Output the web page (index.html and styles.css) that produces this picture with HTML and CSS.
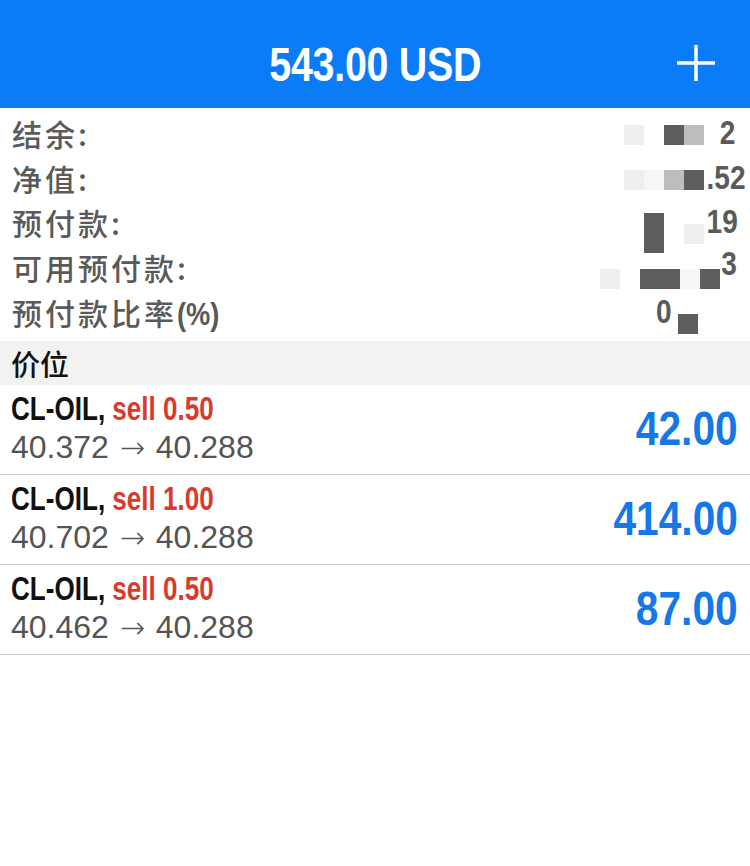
FILE: index.html
```html
<!DOCTYPE html>
<html lang="zh">
<head>
    <meta charset="UTF-8">
    <meta name="viewport" content="width=device-width, initial-scale=1.0">
    <title>交易</title>
    <link rel="stylesheet" href="styles.css">
</head>
<body>
    <div id="tradeApp">
        <div id="topBar">
            <div class="balanceTitle"><span>543.00 USD</span></div>
            <svg class="addBtn" width="40" height="40" viewBox="0 0 40 40">
                <path d="M20 2 V38 M1 20 H39" stroke="#fff" stroke-width="3.5" fill="none"/>
            </svg>
        </div>

        <div id="accountStats">
            <div class="statRow">
                <span class="statLabel">结余:</span>
                <span class="statValue">
                    <i class="px light"></i><i class="px gap"></i><i class="px dark"></i><i class="px mid"></i><b>2</b>
                </span>
            </div>
            <div class="statRow">
                <span class="statLabel">净值:</span>
                <span class="statValue">
                    <i class="px light"></i><i class="px faint"></i><i class="px mid"></i><i class="px dark"></i><b>.52</b>
                </span>
            </div>
            <div class="statRow">
                <span class="statLabel">预付款:</span>
                <span class="statValue">
                    <i class="px gap"></i><i class="px dark tall"></i><i class="px gap"></i><i class="px light low"></i><b>19</b>
                </span>
            </div>
            <div class="statRow">
                <span class="statLabel">可用预付款:</span>
                <span class="statValue">
                    <i class="px light low"></i><i class="px gap"></i><i class="px dark low"></i><i class="px dark low"></i><i class="px faint low"></i><i class="px dark low"></i><b class="tight">3</b>
                </span>
            </div>
            <div class="statRow">
                <span class="statLabel">预付款比率<span class="latin">(%)</span></span>
                <span class="statValue lastValue">
                    <b>0</b><i class="px dark low"></i><i class="px gap"></i><i class="px gap"></i>
                </span>
            </div>
        </div>

        <div class="sectionHead">价位</div>

        <div id="positions">
            <div class="posRow">
                <div class="posInfo">
                    <div class="posTitle"><span>CL-OIL, <em>sell 0.50</em></span></div>
                    <div class="posPrices">40.372 <span class="arrow">→</span> 40.288</div>
                </div>
                <div class="posProfit"><span>42.00</span></div>
            </div>
            <div class="posRow">
                <div class="posInfo">
                    <div class="posTitle"><span>CL-OIL, <em>sell 1.00</em></span></div>
                    <div class="posPrices">40.702 <span class="arrow">→</span> 40.288</div>
                </div>
                <div class="posProfit"><span>414.00</span></div>
            </div>
            <div class="posRow">
                <div class="posInfo">
                    <div class="posTitle"><span>CL-OIL, <em>sell 0.50</em></span></div>
                    <div class="posPrices">40.462 <span class="arrow">→</span> 40.288</div>
                </div>
                <div class="posProfit"><span>87.00</span></div>
            </div>
        </div>
    </div>
</body>
</html>
```
FILE: styles.css
```css
body {
    margin: 0;
    padding: 0;
    background-color: #fff;
    font-family: 'Liberation Sans', Arial, 'Noto Sans CJK SC', sans-serif;
}

#tradeApp {
    width: 750px;
}

/* blue title bar */
#topBar {
    height: 108px;
    background-color: #0b7cf8;
    display: flex;
    align-items: center;
    justify-content: center;
    position: relative;
    padding-top: 20px;
    box-sizing: border-box;
}

.balanceTitle span {
    display: inline-block;
    color: #fff;
    font-size: 48px;
    font-weight: bold;
    transform: scaleX(0.82);
    letter-spacing: -0.3px;
}

.addBtn {
    position: absolute;
    right: 34px;
    top: 43px;
}

/* account numbers */
#accountStats {
    padding: 3px 12px 7px 12px;
}

.statRow {
    height: 44.6px;
    display: flex;
    align-items: center;
    justify-content: space-between;
}

.statLabel {
    font-family: 'Noto Sans CJK SC', sans-serif;
    font-size: 30px;
    letter-spacing: 3px;
    color: #5a5a5a;
    font-weight: 500;
}

.statLabel .latin {
    font-family: 'Liberation Sans', Arial, sans-serif;
    font-weight: bold;
    font-size: 31px;
    letter-spacing: 0;
    display: inline-block;
    transform: scaleX(0.88);
    transform-origin: left center;
}

.statValue {
    display: flex;
    align-items: center;
    height: 100%;
}

.statValue b {
    font-size: 33px;
    color: #5a5a5a;
    display: inline-block;
    transform: scaleX(0.85);
    width: 34px;
    text-align: right;
}

.statValue b.tight {
    width: 18px;
    align-self: flex-start;
    margin-top: 0;
}

.lastValue b {
    width: 20px;
    margin-right: 5px;
}

.px {
    display: block;
    width: 20px;
    height: 20px;
    margin-top: 4px;
}

.px.tall {
    height: 40px;
    margin-top: 22px;
}

.px.low {
    margin-top: 24px;
}

.px.gap { background: transparent; }
.px.light { background: #eeeeee; }
.px.faint { background: #f6f6f6; }
.px.mid { background: #bdbdbd; }
.px.dark { background: #5d5d5d; }

/* section header */
.sectionHead {
    height: 44px;
    background-color: #f2f2f2;
    padding-left: 11px;
    display: flex;
    align-items: center;
    font-family: 'Noto Sans CJK SC', sans-serif;
    font-size: 29px;
    color: #111;
    font-weight: 500;
}

/* open positions */
.posRow {
    height: 90px;
    box-sizing: border-box;
    border-bottom: 1px solid #cacaca;
    padding: 5px 12px 8px 11px;
    display: flex;
    align-items: center;
    justify-content: space-between;
}

.posTitle {
    height: 38px;
    line-height: 38px;
}

.posTitle span {
    display: inline-block;
    font-size: 33px;
    font-weight: bold;
    color: #111;
    transform: scaleX(0.79);
    transform-origin: left center;
    white-space: nowrap;
}

.posTitle em {
    font-style: normal;
    color: #d83b2e;
}

.posPrices {
    height: 38px;
    line-height: 38px;
    font-size: 32px;
    color: #545454;
    white-space: nowrap;
    word-spacing: 2px;
}

.posPrices .arrow {
    font-family: 'DejaVu Sans', sans-serif;
    font-size: 30px;
    font-weight: 300;
}

.posProfit span {
    display: inline-block;
    font-size: 49px;
    font-weight: bold;
    color: #1677e8;
    transform: scaleX(0.83);
    transform-origin: right center;
}
```
